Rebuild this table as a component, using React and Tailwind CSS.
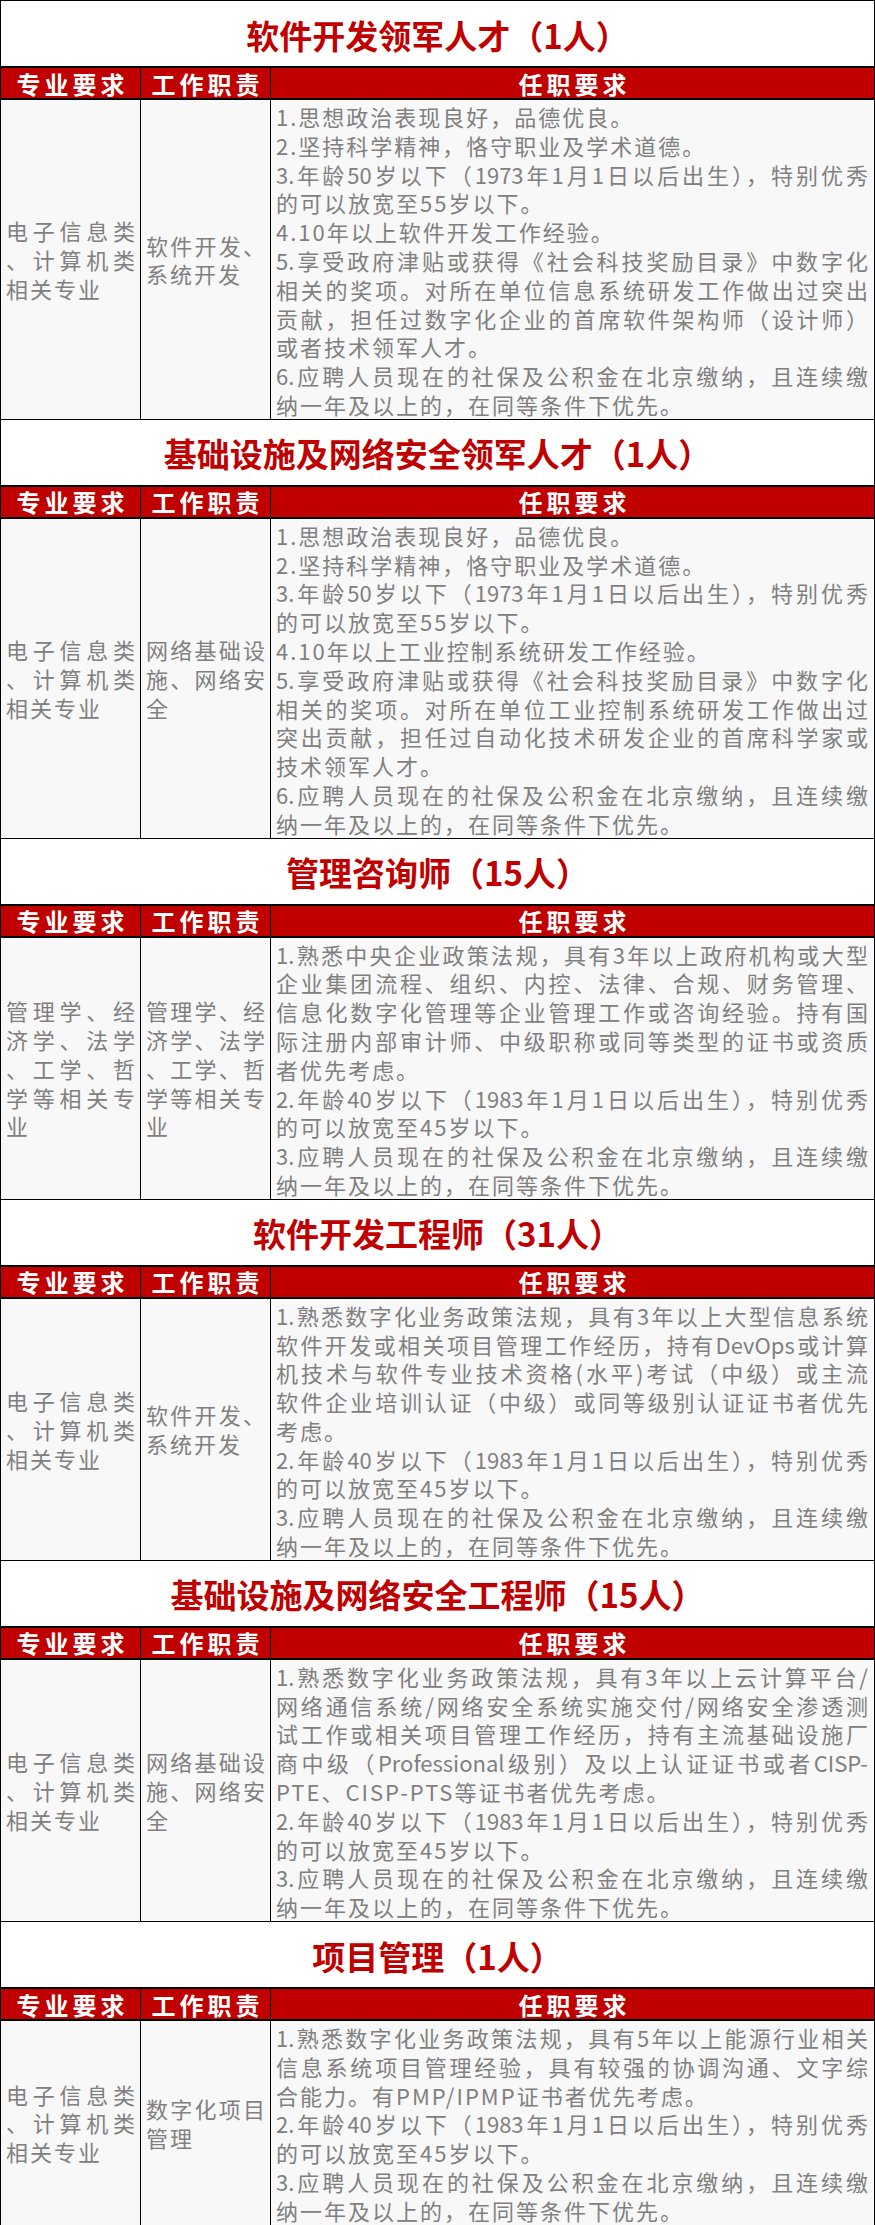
import React from "react";

const sections = [
  {
    title: "软件开发领军人才（1人）",
    major: ["电子信息类", "、计算机类", "相关专业"],
    duty: ["软件开发、", "系统开发"],
    req: [
      ["1.思想政治表现良好，品德优良。"],
      ["2.坚持科学精神，恪守职业及学术道德。"],
      ["3.年龄50岁以下（1973年1月1日以后出生），特别优秀", "的可以放宽至55岁以下。"],
      ["4.10年以上软件开发工作经验。"],
      [
        "5.享受政府津贴或获得《社会科技奖励目录》中数字化",
        "相关的奖项。对所在单位信息系统研发工作做出过突出",
        "贡献，担任过数字化企业的首席软件架构师（设计师）",
        "或者技术领军人才。",
      ],
      ["6.应聘人员现在的社保及公积金在北京缴纳，且连续缴", "纳一年及以上的，在同等条件下优先。"],
    ],
  },
  {
    title: "基础设施及网络安全领军人才（1人）",
    major: ["电子信息类", "、计算机类", "相关专业"],
    duty: ["网络基础设", "施、网络安", "全"],
    req: [
      ["1.思想政治表现良好，品德优良。"],
      ["2.坚持科学精神，恪守职业及学术道德。"],
      ["3.年龄50岁以下（1973年1月1日以后出生），特别优秀", "的可以放宽至55岁以下。"],
      ["4.10年以上工业控制系统研发工作经验。"],
      [
        "5.享受政府津贴或获得《社会科技奖励目录》中数字化",
        "相关的奖项。对所在单位工业控制系统研发工作做出过",
        "突出贡献，担任过自动化技术研发企业的首席科学家或",
        "技术领军人才。",
      ],
      ["6.应聘人员现在的社保及公积金在北京缴纳，且连续缴", "纳一年及以上的，在同等条件下优先。"],
    ],
  },
  {
    title: "管理咨询师（15人）",
    major: ["管理学、经", "济学、法学", "、工学、哲", "学等相关专", "业"],
    duty: ["管理学、经", "济学、法学", "、工学、哲", "学等相关专", "业"],
    req: [
      [
        "1.熟悉中央企业政策法规，具有3年以上政府机构或大型",
        "企业集团流程、组织、内控、法律、合规、财务管理、",
        "信息化数字化管理等企业管理工作或咨询经验。持有国",
        "际注册内部审计师、中级职称或同等类型的证书或资质",
        "者优先考虑。",
      ],
      ["2.年龄40岁以下（1983年1月1日以后出生），特别优秀", "的可以放宽至45岁以下。"],
      ["3.应聘人员现在的社保及公积金在北京缴纳，且连续缴", "纳一年及以上的，在同等条件下优先。"],
    ],
  },
  {
    title: "软件开发工程师（31人）",
    major: ["电子信息类", "、计算机类", "相关专业"],
    duty: ["软件开发、", "系统开发"],
    req: [
      [
        "1.熟悉数字化业务政策法规，具有3年以上大型信息系统",
        "软件开发或相关项目管理工作经历，持有DevOps或计算",
        "机技术与软件专业技术资格(水平)考试（中级）或主流",
        "软件企业培训认证（中级）或同等级别认证证书者优先",
        "考虑。",
      ],
      ["2.年龄40岁以下（1983年1月1日以后出生），特别优秀", "的可以放宽至45岁以下。"],
      ["3.应聘人员现在的社保及公积金在北京缴纳，且连续缴", "纳一年及以上的，在同等条件下优先。"],
    ],
  },
  {
    title: "基础设施及网络安全工程师（15人）",
    major: ["电子信息类", "、计算机类", "相关专业"],
    duty: ["网络基础设", "施、网络安", "全"],
    req: [
      [
        "1.熟悉数字化业务政策法规，具有3年以上云计算平台/",
        "网络通信系统/网络安全系统实施交付/网络安全渗透测",
        "试工作或相关项目管理工作经历，持有主流基础设施厂",
        "商中级（Professional级别）及以上认证证书或者CISP-",
        "PTE、CISP-PTS等证书者优先考虑。",
      ],
      ["2.年龄40岁以下（1983年1月1日以后出生），特别优秀", "的可以放宽至45岁以下。"],
      ["3.应聘人员现在的社保及公积金在北京缴纳，且连续缴", "纳一年及以上的，在同等条件下优先。"],
    ],
  },
  {
    title: "项目管理（1人）",
    major: ["电子信息类", "、计算机类", "相关专业"],
    duty: ["数字化项目", "管理"],
    req: [
      [
        "1.熟悉数字化业务政策法规，具有5年以上能源行业相关",
        "信息系统项目管理经验，具有较强的协调沟通、文字综",
        "合能力。有PMP/IPMP证书者优先考虑。",
      ],
      ["2.年龄40岁以下（1983年1月1日以后出生），特别优秀", "的可以放宽至45岁以下。"],
      ["3.应聘人员现在的社保及公积金在北京缴纳，且连续缴", "纳一年及以上的，在同等条件下优先。"],
    ],
  },
];

// every line but the last one of a paragraph is stretched to the cell width
const Paragraph = ({ lines }) => (
  <>
    {lines.map((line, i) =>
      i < lines.length - 1 ? (
        <div key={i} className="[text-align-last:justify] text-justify">
          {line}
        </div>
      ) : (
        <div key={i} className="tracking-[2px]">
          {line}
        </div>
      )
    )}
  </>
);

const Section = ({ title, major, duty, req }) => (
  <div>
    {/* Title */}
    <div className="flex h-[66px] items-center justify-center border-t border-black bg-white pt-[3px]">
      <h2 className="text-[33px] leading-none font-bold text-[#c00000]">{title}</h2>
    </div>

    {/* Header */}
    <div className="grid h-[34px] grid-cols-[140px_130px_1fr] border-y-2 border-black bg-[#c00000] text-[24px] leading-none font-bold tracking-[4px] text-white">
      <div className="flex items-center justify-center border-r border-black pt-[1px] pl-[4px]">专业要求</div>
      <div className="flex items-center justify-center border-r border-black pt-[1px] pl-[4px]">工作职责</div>
      <div className="flex items-center justify-center pt-[1px] pl-[4px]">任职要求</div>
    </div>

    {/* Body */}
    <div className="grid grid-cols-[140px_130px_1fr] bg-[#f8f8f8] text-[22px] leading-[28.8px] text-[#808080]">
      <div className="flex flex-col justify-center border-r border-black px-[5px]">
        <Paragraph lines={major} />
      </div>
      <div className="flex flex-col justify-center border-r border-black px-[5px]">
        <Paragraph lines={duty} />
      </div>
      <div className="pl-[5px] pr-[6px] pt-[2px]">
        {req.map((p, i) => (
          <Paragraph key={i} lines={p} />
        ))}
      </div>
    </div>
  </div>
);

export default function App() {
  return (
    <div className="w-[875px] border-x border-b border-black bg-white font-['Noto_Sans_CJK_SC','Noto_Sans',sans-serif]">
      {sections.map((s, i) => (
        <Section key={i} {...s} />
      ))}
    </div>
  );
}
